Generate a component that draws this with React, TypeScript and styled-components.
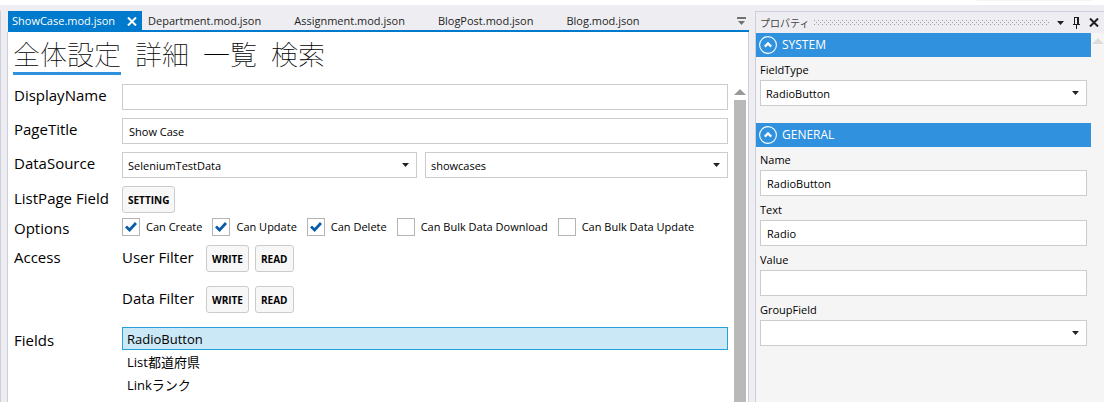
import React, { useId, useState } from "react";
import styled, { createGlobalStyle, css } from "styled-components";

const color = {
  shell: "#eeeef2",
  line: "#cccedb",
  tabBlue: "#007acc",
  blue: "#3091de",
  panel: "#f5f5f5",
  field: "#cccccc",
  text: "#1e1e1e",
};

const Global = createGlobalStyle`
  *, *::before, *::after { box-sizing: border-box; }
  body {
    margin: 0;
    background: #fff;
    color: #000;
    font: 11px/16px "Open Sans", "Noto Sans CJK JP", sans-serif;
    overflow: hidden;
  }
  button, input, select { font: inherit; color: inherit; margin: 0; border-radius: 0; }
`;

const Page = styled.div`
  display: flex;
  flex-direction: column;
  height: 100vh;
`;

const TopStrip = styled.div`
  flex: none;
  display: flex;
  justify-content: flex-end;
  height: 5px;
  padding-right: 12px;
`;

const TopStripEdge = styled.div`
  width: 115px;
  height: 1px;
  background: ${color.panel};
`;

const Shell = styled.div`
  flex: 1;
  min-height: 0;
  display: flex;
  gap: 6px;
  padding-top: 6px;
  background: ${color.shell};
`;

const SideEdge = styled.div`
  flex: none;
  width: 1px;
  background: ${color.line};
`;

const Documents = styled.main`
  flex: 1;
  min-width: 0;
  display: flex;
  flex-direction: column;
`;

const TabStrip = styled.div`
  flex: none;
  display: flex;
  align-items: stretch;
  height: 21px;
  margin-left: 1px;
  border-bottom: 2px solid ${color.tabBlue};
`;

const DocTab = styled.button<{ $active?: boolean }>`
  flex: none;
  border: 0;
  padding: 0 27px 0 6px;
  background: transparent;
  color: ${color.text};
  line-height: 18px;
  text-align: left;
  white-space: nowrap;
  ${(p) =>
    p.$active &&
    css`
      padding: 0 0 0 4px;
      background: ${color.tabBlue};
      color: #fff;
    `}
`;

const TabClose = styled.button`
  flex: none;
  display: flex;
  align-items: center;
  border: 0;
  padding: 2px 5px 0 12px;
  background: ${color.tabBlue};
  color: #fff;
`;

const TabMenu = styled.button`
  display: flex;
  align-items: center;
  margin-left: auto;
  border: 0;
  padding: 0 3px 0 0;
  background: transparent;
`;

const DocBody = styled.div`
  flex: 1;
  min-height: 0;
  display: flex;
  flex-direction: column;
  border: solid ${color.line};
  border-width: 0 1px;
  background: #fff;
`;

const Sections = styled.nav`
  flex: none;
  display: flex;
  gap: 14px;
  padding: 4px 5px 0;
`;

const SectionLink = styled.a<{ $active?: boolean }>`
  border-bottom: 3px solid ${(p) => (p.$active ? color.blue : "transparent")};
  color: #000;
  font: 100 27px/36px "Noto Sans CJK JP", sans-serif;
  text-decoration: none;
`;

const Scroller = styled.div`
  flex: 1;
  min-height: 0;
  display: flex;
  gap: 6px;
  padding: 9px 2px 0 6px;
`;

const Form = styled.form`
  flex: 1;
  min-width: 0;
`;

const Row = styled.div<{ $gap?: number }>`
  display: grid;
  grid-template-columns: 108px minmax(0, 1fr);
  align-items: center;
  margin-bottom: ${(p) => p.$gap ?? 8}px;
`;

const RowLabel = styled.label<{ $low?: boolean }>`
  padding: ${(p) => (p.$low ? "3px 0 1px" : "0 0 4px")};
  font-size: 15px;
  line-height: 20px;
  white-space: nowrap;
`;

const TextBox = styled.input`
  width: 100%;
  height: 26px;
  border: 1px solid ${color.field};
  padding: 1px 6px 0;
  background: #fff;
  outline: 0;
`;

const ComboWrap = styled.span`
  display: grid;
  align-items: center;
  & > * {
    grid-area: 1 / 1;
  }
  & > svg {
    justify-self: end;
    margin-right: 8px;
    pointer-events: none;
  }
`;

const ComboBox = styled.select`
  appearance: none;
  width: 100%;
  height: 26px;
  border: 1px solid ${color.field};
  padding: 1px 20px 0 5px;
  background: #fff;
  outline: 0;
`;

const ComboPair = styled.div`
  display: grid;
  grid-template-columns: minmax(0, 36fr) minmax(0, 37fr);
  gap: 8px;
`;

const PushButton = styled.button`
  height: 27px;
  border: 1px solid ${color.field};
  border-radius: 3px;
  padding: 0 5px;
  background: #f7f7f7;
  font-size: 10px;
  font-weight: 700;
`;

const CheckList = styled.div`
  display: flex;
  gap: 10px;
`;

const CheckLabel = styled.label`
  display: flex;
  align-items: center;
  gap: 6px;
  line-height: 18px;
  white-space: nowrap;
`;

const CheckCell = styled.span`
  display: grid;
  place-items: center;
  & > * {
    grid-area: 1 / 1;
  }
  & > svg {
    pointer-events: none;
  }
`;

const CheckInput = styled.input`
  appearance: none;
  width: 18px;
  height: 18px;
  border: 1px solid #b4b4b4;
  background: #fff;
`;

const Filter = styled.div`
  display: grid;
  grid-template-columns: 84px auto;
  justify-content: start;
  align-items: center;
`;

const FilterButtons = styled.div`
  display: flex;
  gap: 6px;
`;

const FieldsRow = styled(Row)`
  align-items: start;
`;

const FieldList = styled.ul`
  margin: 0;
  padding: 0;
  list-style: none;
`;

const FieldItem = styled.li<{ $selected?: boolean }>`
  height: 23px;
  border: 1px solid ${(p) => (p.$selected ? "#26a0da" : "transparent")};
  padding: 0 4px;
  background: ${(p) => (p.$selected ? "#cbe8f6" : "transparent")};
  font-size: 13px;
  line-height: 22px;
`;

const ScrollTrack = styled.div`
  flex: none;
  display: flex;
  flex-direction: column;
  align-items: center;
  gap: 5px;
  width: 12px;
  padding-top: 5px;
`;

const ScrollThumb = styled.div`
  flex: 1;
  width: 100%;
  background: #b9b9b9;
`;

const Properties = styled.aside`
  flex: none;
  width: 349px;
  display: flex;
  flex-direction: column;
  border: solid ${color.line};
  border-width: 1px 0 0 1px;
  background: ${color.panel};
`;

const PanelHeader = styled.header`
  flex: none;
  display: flex;
  align-items: center;
  height: 21px;
  padding: 0 5px 0 4px;
  background: ${color.shell};
  color: #444;
`;

const PanelTitle = styled.h2`
  margin: 0 5px 0 0;
  font-size: 10px;
  font-weight: 400;
  line-height: 20px;
`;

const Grip = styled.svg`
  flex: 1;
  min-width: 0;
  height: 5px;
  margin-right: 7px;
`;

const PanelTools = styled.div`
  display: flex;
  gap: 8px;
`;

const ToolButton = styled.button`
  display: flex;
  align-items: center;
  border: 0;
  padding: 0;
  background: transparent;
`;

const PanelBody = styled.div`
  flex: 1;
  min-height: 0;
  display: flex;
`;

const Groups = styled.div`
  flex: 1;
  min-width: 0;
`;

const Group = styled.section`
  margin-bottom: 17px;
`;

const GroupHeader = styled.button`
  display: flex;
  align-items: center;
  gap: 5px;
  width: 100%;
  height: 24px;
  border: 0;
  padding: 0 3px;
  background: ${color.blue};
  color: #fff;
  font-size: 12px;
`;

const GroupFields = styled.div`
  padding: 0 4px;
`;

const Property = styled.div`
  display: flex;
  flex-direction: column;
  & + & {
    margin-top: 1px;
  }
`;

const PropertyLabel = styled.label`
  padding: 3px 0 1px;
  line-height: 19px;
`;

const PanelScroll = styled.div`
  flex: none;
  width: 13px;
  padding: 5px 0 0 1px;
`;

function Caret() {
  return (
    <svg width="7" height="4" viewBox="0 0 7 4" aria-hidden="true">
      <path d="M0 0h7L3.500 4z" fill="#222" />
    </svg>
  );
}

function ScrollArrow({ fill }: { fill: string }) {
  return (
    <svg width="12" height="6" viewBox="0 0 12 6" aria-hidden="true" display="block">
      <path d="M6 0l6 6H0z" fill={fill} />
    </svg>
  );
}

function Cross({ stroke }: { stroke: string }) {
  return (
    <svg width="10" height="9" viewBox="0 0 10 9" aria-hidden="true">
      <path d="M1 .5l8 8M9 .5l-8 8" stroke={stroke} strokeWidth="2" fill="none" />
    </svg>
  );
}

function Combo({ id, label, options }: { id?: string; label?: string; options: string[] }) {
  return (
    <ComboWrap>
      <ComboBox id={id} aria-label={label}>
        {options.map((o) => (
          <option key={o}>{o}</option>
        ))}
      </ComboBox>
      <Caret />
    </ComboWrap>
  );
}

function Check({ label, initial }: { label: string; initial: boolean }) {
  const [on, setOn] = useState(initial);
  return (
    <CheckLabel>
      <CheckCell>
        <CheckInput type="checkbox" checked={on} onChange={() => setOn(!on)} />
        {on && (
          <svg width="12" height="10" viewBox="0 0 12 10" aria-hidden="true">
            <path d="M1 4.600l3.600 3.400L11 1" stroke="#0a5ca8" strokeWidth="2.8" fill="none" />
          </svg>
        )}
      </CheckCell>
      {label}
    </CheckLabel>
  );
}

function AccessFilter({ name }: { name: string }) {
  return (
    <Filter>
      <RowLabel as="span">{name}</RowLabel>
      <FilterButtons>
        <PushButton type="button">WRITE</PushButton>
        <PushButton type="button">READ</PushButton>
      </FilterButtons>
    </Filter>
  );
}

function PropertyField({ label, value, options }: { label: string; value?: string; options?: string[] }) {
  const id = useId();
  return (
    <Property>
      <PropertyLabel htmlFor={id}>{label}</PropertyLabel>
      {options ? <Combo id={id} options={options} /> : <TextBox id={id} defaultValue={value} />}
    </Property>
  );
}

function PropertyGroup({ title, children }: { title: string; children: React.ReactNode }) {
  return (
    <Group>
      <GroupHeader type="button">
        <svg width="18" height="18" viewBox="0 0 18 18" fill="none" stroke="#fff" aria-hidden="true">
          <circle cx="9" cy="9" r="8.4" strokeWidth="1.1" />
          <path d="M5.800 10.600L9 7.400l3.200 3.200" strokeWidth="2.2" />
        </svg>
        {title}
      </GroupHeader>
      <GroupFields>{children}</GroupFields>
    </Group>
  );
}

const files = ["Department.mod.json", "Assignment.mod.json", "BlogPost.mod.json", "Blog.mod.json"];
const sections = ["全体設定", "詳細", "一覧", "検索"];
const checks: [string, boolean][] = [
  ["Can Create", true],
  ["Can Update", true],
  ["Can Delete", true],
  ["Can Bulk Data Download", false],
  ["Can Bulk Data Update", false],
];
const fields = ["RadioButton", "List都道府県", "Linkランク"];

export default function App() {
  return (
    <Page>
      <Global />
      <TopStrip>
        <TopStripEdge />
      </TopStrip>
      <Shell>
        <SideEdge />
        <Documents>
          <TabStrip>
            <DocTab $active>ShowCase.mod.json</DocTab>
            <TabClose aria-label="Close">
              <Cross stroke="#fff" />
            </TabClose>
            {files.map((f) => (
              <DocTab key={f}>{f}</DocTab>
            ))}
            <TabMenu aria-label="Open documents">
              <svg width="9" height="8" viewBox="0 0 9 8" fill="#717171" aria-hidden="true">
                <path d="M0 0h9v2H0zM1 4h7L4.500 8z" />
              </svg>
            </TabMenu>
          </TabStrip>
          <DocBody>
            <Sections>
              {sections.map((s, i) => (
                <SectionLink key={s} href="#" $active={i === 0}>
                  {s}
                </SectionLink>
              ))}
            </Sections>
            <Scroller>
              <Form>
                <Row>
                  <RowLabel htmlFor="display-name">DisplayName</RowLabel>
                  <TextBox id="display-name" />
                </Row>
                <Row>
                  <RowLabel htmlFor="page-title">PageTitle</RowLabel>
                  <TextBox id="page-title" defaultValue="Show Case" />
                </Row>
                <Row>
                  <RowLabel htmlFor="data-source">DataSource</RowLabel>
                  <ComboPair>
                    <Combo id="data-source" options={["SeleniumTestData"]} />
                    <Combo label="Table" options={["showcases"]} />
                  </ComboPair>
                </Row>
                <Row $gap={2}>
                  <RowLabel as="span">ListPage Field</RowLabel>
                  <div>
                    <PushButton type="button">SETTING</PushButton>
                  </div>
                </Row>
                <Row $gap={6}>
                  <RowLabel as="span" $low>
                    Options
                  </RowLabel>
                  <CheckList>
                    {checks.map(([label, on]) => (
                      <Check key={label} label={label} initial={on} />
                    ))}
                  </CheckList>
                </Row>
                <Row $gap={14}>
                  <RowLabel as="span">Access</RowLabel>
                  <AccessFilter name="User Filter" />
                </Row>
                <Row $gap={14}>
                  <span />
                  <AccessFilter name="Data Filter" />
                </Row>
                <FieldsRow>
                  <RowLabel as="span" $low>
                    Fields
                  </RowLabel>
                  <FieldList>
                    {fields.map((f, i) => (
                      <FieldItem key={f} $selected={i === 0}>
                        {f}
                      </FieldItem>
                    ))}
                  </FieldList>
                </FieldsRow>
              </Form>
              <ScrollTrack>
                <ScrollArrow fill="#999" />
                <ScrollThumb />
              </ScrollTrack>
            </Scroller>
          </DocBody>
        </Documents>
        <Properties>
          <PanelHeader>
            <PanelTitle>プロパティ</PanelTitle>
            <Grip aria-hidden="true">
              <defs>
                <pattern id="grip" width="4" height="4" patternUnits="userSpaceOnUse">
                  <path d="M0 0h1v1H0zM2 2h1v1H2z" fill="#999" />
                </pattern>
              </defs>
              <rect width="100%" height="5" fill="url(#grip)" />
            </Grip>
            <PanelTools>
              <ToolButton aria-label="Window position">
                <Caret />
              </ToolButton>
              <ToolButton aria-label="Auto hide">
                <svg width="9" height="12" viewBox="0 0 9 12" fill="#1e1e1e" aria-hidden="true">
                  <path d="M2 0h5v7h1v1H5v4H4V8H1V7h1zM3 1v6h2V1z" fillRule="evenodd" />
                </svg>
              </ToolButton>
              <ToolButton aria-label="Close">
                <Cross stroke="#1e1e1e" />
              </ToolButton>
            </PanelTools>
          </PanelHeader>
          <PanelBody>
            <Groups>
              <PropertyGroup title="SYSTEM">
                <PropertyField label="FieldType" options={["RadioButton"]} />
              </PropertyGroup>
              <PropertyGroup title="GENERAL">
                <PropertyField label="Name" value="RadioButton" />
                <PropertyField label="Text" value="Radio" />
                <PropertyField label="Value" />
                <PropertyField label="GroupField" options={[""]} />
              </PropertyGroup>
            </Groups>
            <PanelScroll>
              <ScrollArrow fill="#dcdcdc" />
            </PanelScroll>
          </PanelBody>
        </Properties>
      </Shell>
    </Page>
  );
}
